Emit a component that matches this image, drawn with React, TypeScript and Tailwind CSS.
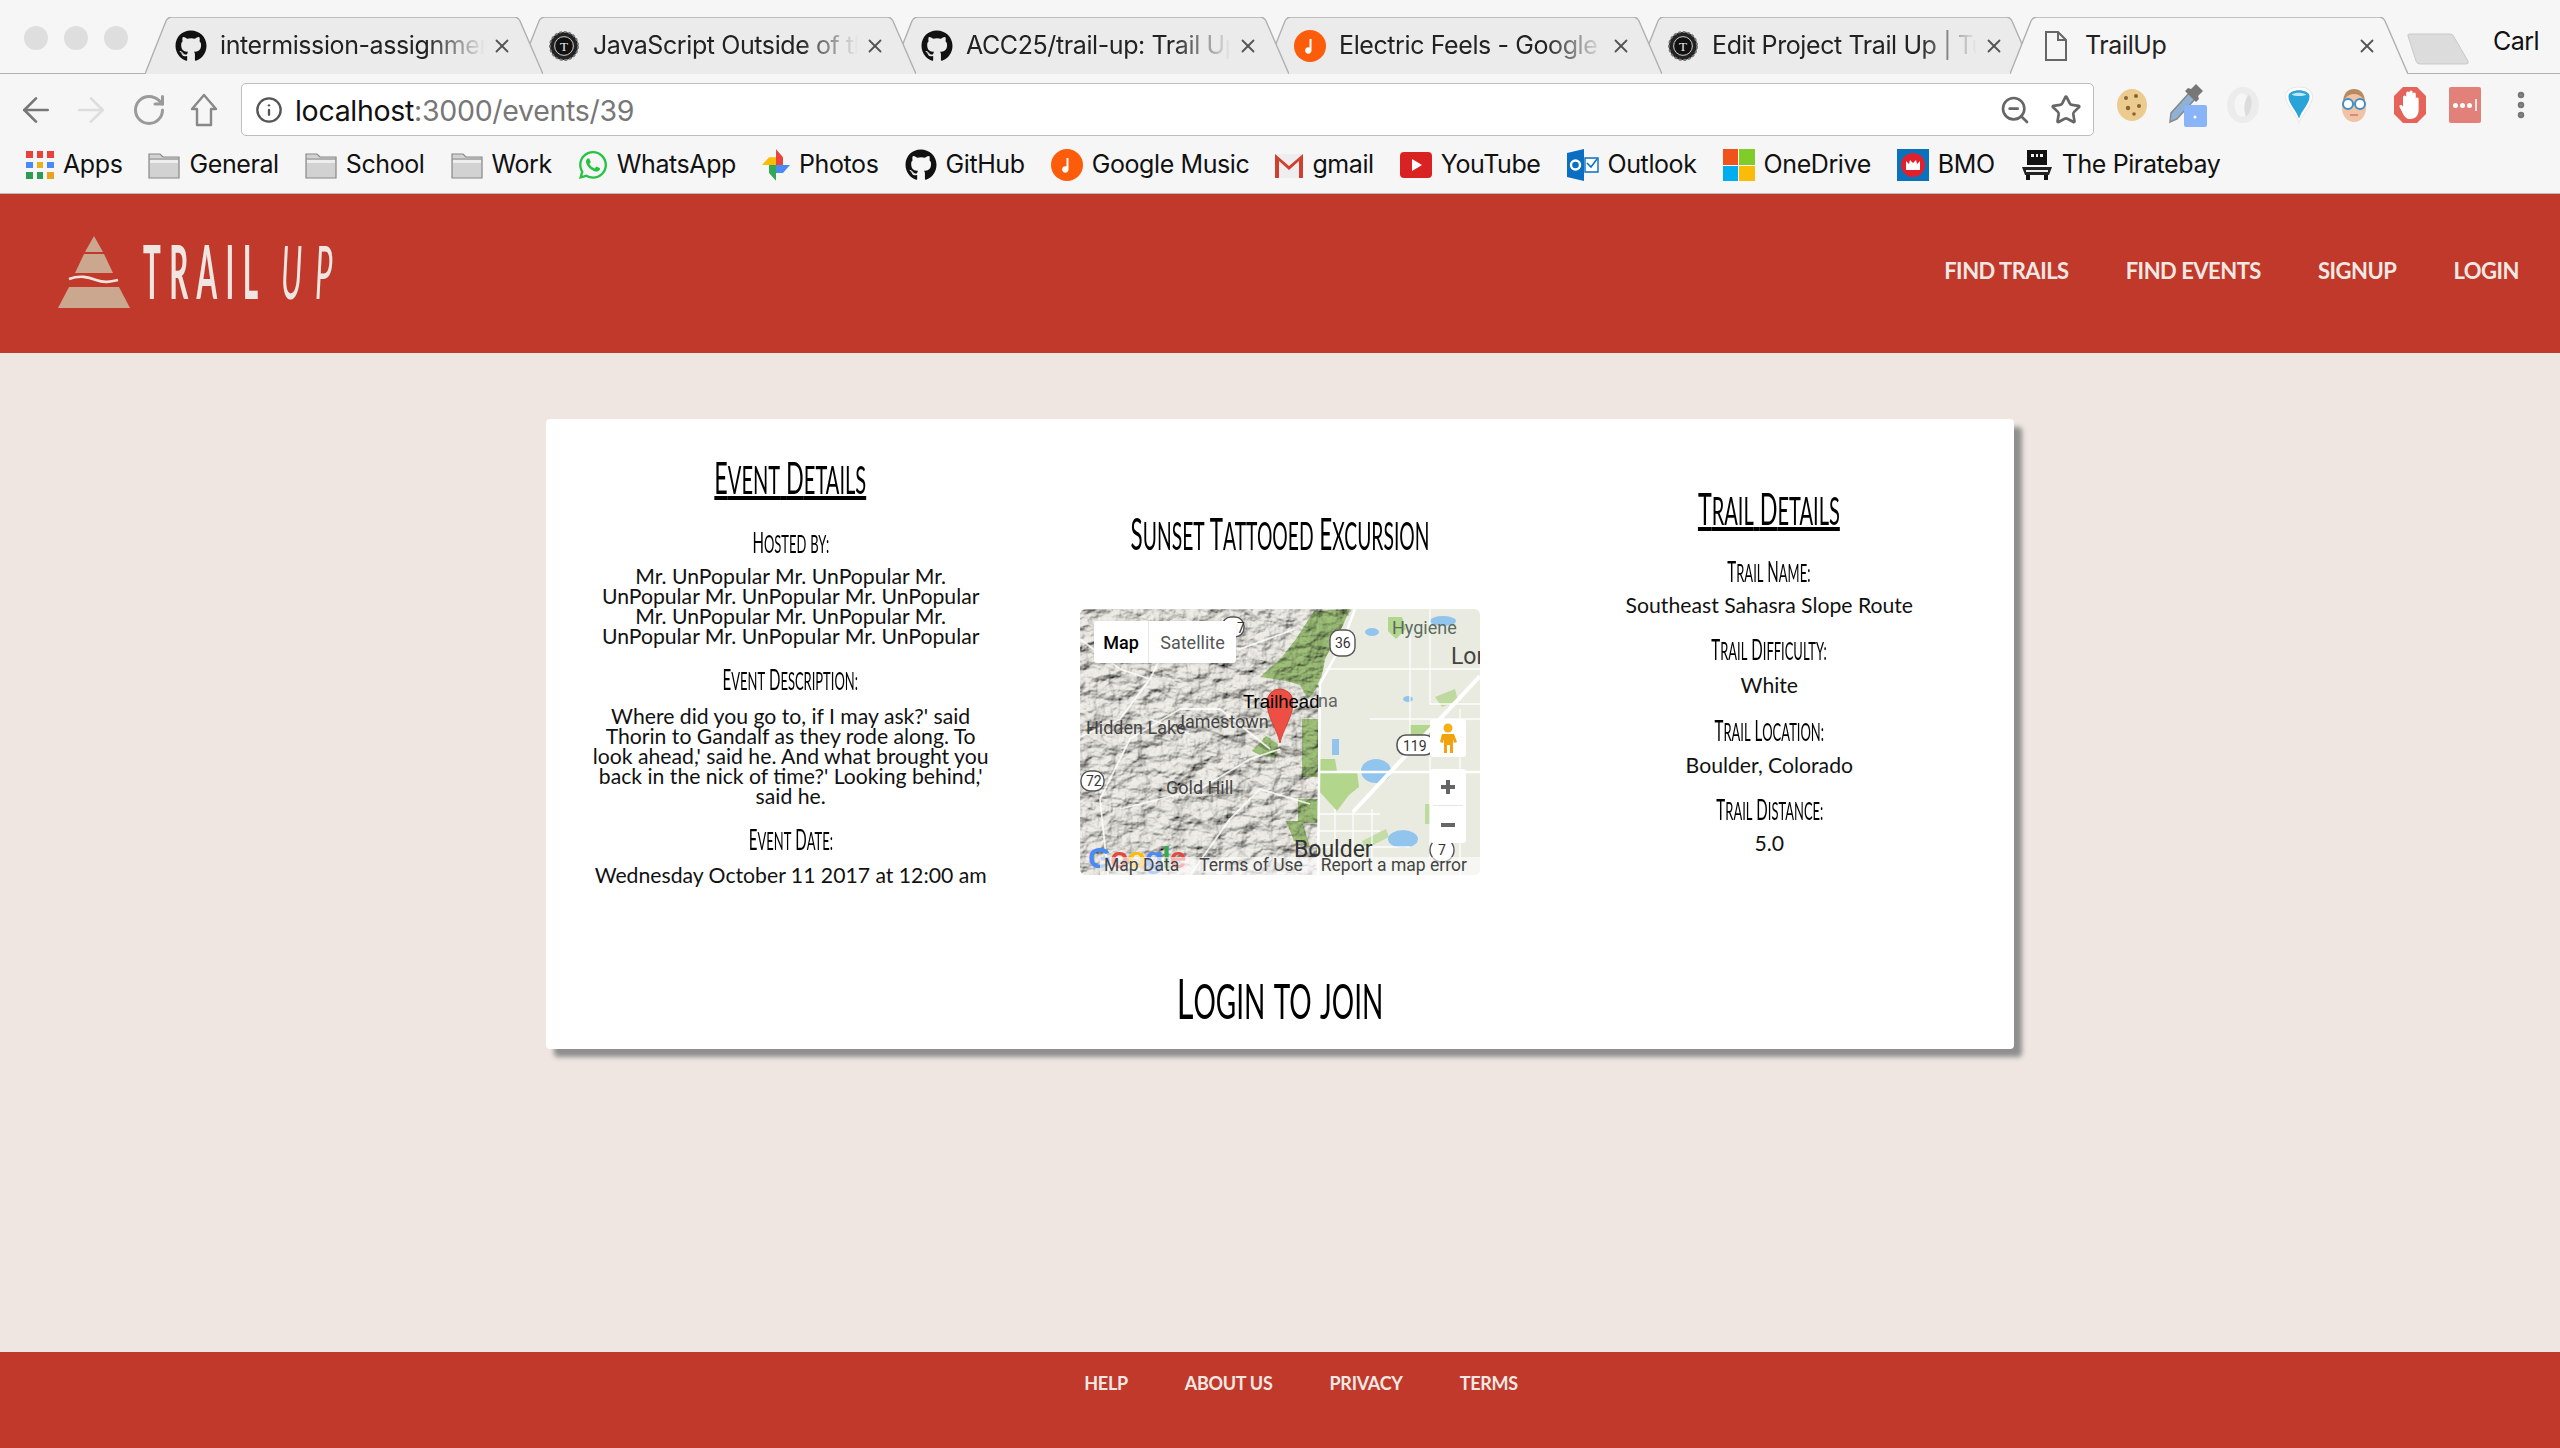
import React from "react";
import { FaGithub, FaWhatsapp } from "react-icons/fa";
import { ArrowLeft, ArrowRight, RotateCw, Info, ZoomOut, Star, X, MoreVertical } from "lucide-react";

function Caps({ text, className }: { text: string; className: string }) {
  return (
    <div className="flex h-full items-center justify-center">
      <span className={"inline-block whitespace-nowrap uppercase [font-family:Lato,sans-serif] " + className}>
        {text.split(" ").map((w, i) => {
          const big = w[0] !== w[0].toLowerCase();
          return (
            <React.Fragment key={i}>
              {i > 0 ? " " : ""}
              {big ? <span>{w[0]}</span> : null}
              <span className="text-[0.86em]">{big ? w.slice(1) : w}</span>
            </React.Fragment>
          );
        })}
      </span>
    </div>
  );
}

const GH = () => <FaGithub className="h-[32px] w-[32px] text-[#111]" />;
const Music = () => (
  <svg viewBox="0 0 32 32" className="h-[32px] w-[32px]">
    <circle cx="16" cy="16" r="16" fill="#fd5c0a" />
    <path d="M17.5 9v11.5a3.2 3.2 0 1 1-2-3V9z" fill="#fff" />
  </svg>
);
const Gear = () => (
  <svg viewBox="0 0 32 32" className="h-[30px] w-[30px]">
    <circle cx="16" cy="16" r="15" fill="#222" stroke="#777" strokeWidth="2" strokeDasharray="3 2" />
    <circle cx="16" cy="16" r="10" fill="#111" stroke="#ddd" strokeWidth="1" />
    <text x="16" y="21" fontSize="14" textAnchor="middle" fill="#eee" fontFamily="Liberation Serif">T</text>
  </svg>
);
const Doc = () => (
  <svg viewBox="0 0 24 32" className="h-[32px] w-[24px]" fill="none" stroke="#666" strokeWidth="2">
    <path d="M2 2h12l8 8v20H2zM14 2v8h8" />
  </svg>
);

const tabs = [
  { z: "z-[6]", icon: <GH />, title: "intermission-assignment" },
  { z: "z-[5]", icon: <Gear />, title: "JavaScript Outside of the Browser" },
  { z: "z-[4]", icon: <GH />, title: "ACC25/trail-up: Trail Up" },
  { z: "z-[3]", icon: <Music />, title: "Electric Feels - Google Music" },
  { z: "z-[2]", icon: <Gear />, title: "Edit Project Trail Up | Tuts" },
];

function TabShape({ active }: { active?: boolean }) {
  return (
    <svg viewBox="0 0 398 57" preserveAspectRatio="none" className="absolute inset-0 h-full w-full">
      <path
        d="M0 57 L21 4 Q23 0 27 0 L369 0 Q373 0 375 4 L398 57"
        fill={active ? "#f6f6f6" : "#ebebeb"}
        stroke="#b0b0b0"
        strokeWidth="1.4"
      />
    </svg>
  );
}

function Tab({ z, icon, title, active }: { z: string; icon: React.ReactNode; title: string; active?: boolean }) {
  return (
    <div className={"relative -mr-[25px] flex h-[57px] w-[398px] shrink-0 items-center pl-[30px] pr-[30px] " + z}>
      <TabShape active={active} />
      <div className="relative flex w-[32px] shrink-0 justify-center">{icon}</div>
      <div
        className={
          "relative ml-[13px] w-[265px] overflow-hidden whitespace-nowrap text-[25px] text-[#222] [font-family:Inter,sans-serif] tracking-[-0.4px] " +
          (active ? "" : "[mask-image:linear-gradient(to_right,black_78%,transparent_100%)]")
        }
      >
        {title}
      </div>
      <X className="relative ml-auto shrink-0 text-[#555]" size={22} strokeWidth={2} />
    </div>
  );
}

function Folder() {
  return (
    <svg viewBox="0 0 32 28" className="h-[28px] w-[32px]">
      <path d="M1 3h11l3 3h16v21H1z" fill="#d2d2d2" stroke="#888" strokeWidth="1.2" />
      <path d="M1 8h30" stroke="#999" strokeWidth="1.2" />
      <path d="M2 9h28v3H2z" fill="#eee" />
    </svg>
  );
}
const AppsIcon = () => (
  <div className="grid h-[28px] w-[28px] grid-cols-3 gap-[4px]">
    {["bg-[#e8423a]", "bg-[#e8423a]", "bg-[#e8423a]", "bg-[#4a8af4]", "bg-[#e9b21f]", "bg-[#4a8af4]", "bg-[#2d9b54]", "bg-[#2d9b54]", "bg-[#e9a41f]"].map((c, i) => (
      <div key={i} className={c} />
    ))}
  </div>
);
const Photos = () => (
  <svg viewBox="0 0 32 36" className="h-[34px] w-[28px]">
    <path d="M16 18V0l8 9v9z" fill="#e8453c" />
    <path d="M16 18h16l-8 9h-8z" fill="#4a8af4" />
    <path d="M16 18v18l-8-9v-9z" fill="#34a853" />
    <path d="M16 18H0l8-9h8z" fill="#fbbc05" />
  </svg>
);
const Gmail = () => (
  <svg viewBox="0 0 28 28" className="h-[28px] w-[28px]">
    <path d="M0 3h28v24H0z" fill="#eee" />
    <path d="M0 3l14 12L28 3v24h-4V10L14 19 4 10v17H0z" fill="#d0402f" />
  </svg>
);
const YT = () => (
  <svg viewBox="0 0 32 26" className="h-[26px] w-[32px]">
    <rect width="32" height="26" rx="4" fill="#d92323" />
    <path d="M12 7l10 6-10 6z" fill="#fff" />
  </svg>
);
const Outlook = () => (
  <svg viewBox="0 0 32 32" className="h-[32px] w-[32px]">
    <path d="M0 4l17-4v32L0 28z" fill="#0a6fc2" />
    <circle cx="8.5" cy="16" r="4.5" fill="none" stroke="#fff" strokeWidth="2.4" />
    <path d="M18 9h13v14H18z" fill="#fff" stroke="#0a6fc2" strokeWidth="1.4" />
    <path d="M20 14l4 4 6-8" fill="none" stroke="#0a6fc2" strokeWidth="1.5" />
  </svg>
);
const MS = () => (
  <div className="grid h-[32px] w-[32px] grid-cols-2 gap-[1px]">
    <div className="bg-[#f1511b]" />
    <div className="bg-[#80cc28]" />
    <div className="bg-[#00adef]" />
    <div className="bg-[#fbbc09]" />
  </div>
);
const BMO = () => (
  <svg viewBox="0 0 32 32" className="h-[32px] w-[32px]">
    <rect width="32" height="32" fill="#0a72bd" />
    <circle cx="16" cy="16" r="12" fill="#e2202c" />
    <path d="M9 21v-9l3 3 1-4 3 3 3-3 1 4 3-3v9z" fill="#fff" />
  </svg>
);
const Pirate = () => (
  <svg viewBox="0 0 32 32" className="h-[32px] w-[32px]">
    <path d="M6 1h20v15H6z" fill="#111" />
    <path d="M10 5h3v3h-3zM15 5h2v3h-2zM19 5h3v3h-3z" fill="#eee" />
    <path d="M1 18h30l-3 8H4z" fill="#222" />
    <path d="M5 21h22v2H5z" fill="#eee" />
    <path d="M5 26h4v5H5zM23 26h4v5h-4z" fill="#111" />
  </svg>
);

const bookmarks: [React.ReactNode, string][] = [
  [<AppsIcon />, "Apps"],
  [<Folder />, "General"],
  [<Folder />, "School"],
  [<Folder />, "Work"],
  [<FaWhatsapp className="h-[32px] w-[30px] text-[#25c243]" />, "WhatsApp"],
  [<Photos />, "Photos"],
  [<GH />, "GitHub"],
  [<Music />, "Google Music"],
  [<Gmail />, "gmail"],
  [<YT />, "YouTube"],
  [<Outlook />, "Outlook"],
  [<MS />, "OneDrive"],
  [<BMO />, "BMO"],
  [<Pirate />, "The Piratebay"],
];

const Ext = ({ children }: { children: React.ReactNode }) => <div className="flex h-[40px] w-[55.6px] items-center justify-center">{children}</div>;

function Extensions() {
  return (
    <div className="ml-[10px] flex items-center pt-[2px]">
      <Ext>
        <svg viewBox="0 0 32 34" className="h-[36px] w-[32px]">
          <ellipse cx="16" cy="17" rx="15" ry="16" fill="#eccb8f" />
          <circle cx="10" cy="10" r="2" fill="#8a6233" />
          <circle cx="20" cy="8" r="2" fill="#8a6233" />
          <circle cx="23" cy="18" r="2" fill="#8a6233" />
          <circle cx="12" cy="20" r="2.2" fill="#8a6233" />
          <circle cx="18" cy="26" r="1.8" fill="#8a6233" />
        </svg>
      </Ext>
      <Ext>
        <svg viewBox="0 0 40 44" className="h-[44px] w-[40px]">
          <path d="M4 30L22 10l6 6L10 36l-7 3z" fill="#8fb1d4" stroke="#888" strokeWidth="1.5" />
          <path d="M24 6l5-5 7 7-5 5 1 3-3 3-11-11 3-3z" fill="#777" />
          <rect x="17" y="22" width="23" height="22" rx="2" fill="#8ab4f8" />
          <circle cx="28" cy="34" r="1.5" fill="#fff" />
        </svg>
      </Ext>
      <Ext>
        <svg viewBox="0 0 32 36" className="h-[40px] w-[34px]">
          <ellipse cx="16" cy="18" rx="15" ry="17" fill="#ececec" />
          <ellipse cx="15" cy="18" rx="7" ry="11" fill="#f6f6f6" />
          <path d="M22 8c-5 4-6 14-3 21 5-5 7-15 3-21z" fill="#dcdcdc" />
        </svg>
      </Ext>
      <Ext>
        <svg viewBox="0 0 28 36" className="h-[38px] w-[30px]">
          <path d="M14 35C11 26 1 18 1 10 1 4 7 1 14 1s13 3 13 9c0 8-10 16-13 25z" fill="#fff" stroke="#e8e8e8" />
          <path d="M14 31C12 24 4 17 4 10c0-4 5-6 10-6s10 2 10 6c0 7-8 14-10 21z" fill="#2aa3d8" />
          <path d="M7 8c3-2 10-2 14 0-3 2-11 2-14 0z" fill="#bfe8f6" />
        </svg>
      </Ext>
      <Ext>
        <svg viewBox="0 0 32 36" className="h-[36px] w-[32px]">
          <path d="M5 16C5 6 10 2 16 2s11 4 11 14v8H5z" fill="#b98a5f" />
          <ellipse cx="16" cy="21" rx="12" ry="14" fill="#f0c3a4" />
          <circle cx="10" cy="17" r="5" fill="#fff" stroke="#3f8fc4" strokeWidth="2" />
          <circle cx="22" cy="17" r="5" fill="#fff" stroke="#3f8fc4" strokeWidth="2" />
          <path d="M12 28h8" stroke="#c77" strokeWidth="1.5" />
        </svg>
      </Ext>
      <Ext>
        <svg viewBox="0 0 32 36" className="h-[36px] w-[32px]">
          <path d="M9 0h14l9 9v18l-9 9H9l-9-9V9z" fill="#e6635a" />
          <path d="M9 20V10a1.6 1.6 0 0 1 3.2 0V6a1.6 1.6 0 0 1 3.2 0v-1a1.6 1.6 0 0 1 3.2 0v2a1.6 1.6 0 0 1 3.2 0v5a1.4 1.4 0 0 1 2.8 0v11c0 5-3 9-8 9-4 0-6-2-8-6l-3-6c-1-2 2-3 3-1z" fill="#fff" />
        </svg>
      </Ext>
      <Ext>
        <div className="flex h-[36px] w-[32px] items-center justify-center gap-[2px] rounded-[2px] bg-[#e2807a]">
          <div className="h-[5px] w-[5px] rounded-full bg-white" />
          <div className="h-[5px] w-[5px] rounded-full bg-white" />
          <div className="h-[5px] w-[5px] rounded-full bg-white" />
          <div className="ml-[1px] h-[12px] w-[2px] bg-white/80" />
        </div>
      </Ext>
      <Ext>
        <MoreVertical className="text-[#777]" size={34} strokeWidth={2.6} />
      </Ext>
    </div>
  );
}

function MapPic() {
  return (
    <svg viewBox="0 0 400 266" className="absolute inset-0 h-full w-full">
      <defs>
        <filter id="terrain" x="0" y="0" width="100%" height="100%">
          <feTurbulence type="fractalNoise" baseFrequency="0.05 0.07" numOctaves="6" seed="23" result="n" />
          <feDiffuseLighting in="n" surfaceScale="7" diffuseConstant="1.1" lightingColor="#e6e4de">
            <feDistantLight azimuth="235" elevation="55" />
          </feDiffuseLighting>
        </filter>
        <clipPath id="mtn">
          <path d="M0 0H272L245 50 238 90V266H0z" />
        </clipPath>
      </defs>
      <rect width="400" height="266" fill="#e9ebe1" />
      <g clipPath="url(#mtn)">
        <rect width="400" height="266" filter="url(#terrain)" />
        <g fill="#a9cf86" className="mix-blend-multiply">
          <path d="M180 68l22-20 14-18 18-28 36-2-22 50-12 30-8 10-8-14-14-4z" />
          <path d="M172 142l14-15 12 8-2 14-14-2z" />
          <path d="M222 110h16v58h-16z" />
          <path d="M218 190h20v24h-20z" />
          <path d="M206 212l16 0 8 26-16-6z" />
        </g>
      </g>
      <g fill="#b3d68d">
        <path d="M239 150h16l2 12 20 0 2 16-10 8-12 16-18-20z" />
        <path d="M308 8h14l4 12-10 10-8-8z" />
        <path d="M330 116h24l-4 12-20 4z" />
        <path d="M345 195h18v20h-18z" opacity=".8" />
        <path d="M355 88l20-8 3 12-16 6z" opacity=".8" />
        <path d="M282 232l24-12 3 8-24 12z" opacity=".7" />
      </g>
      <g fill="#92c5ee">
        <ellipse cx="292" cy="23" rx="7" ry="4" />
        <ellipse cx="363" cy="12" rx="13" ry="5" />
        <ellipse cx="296" cy="162" rx="15" ry="12" />
        <ellipse cx="323" cy="230" rx="15" ry="9" />
        <ellipse cx="328" cy="90" rx="5" ry="3" />
        <path d="M252 130h7v16h-7z" />
      </g>
      <g fill="none" stroke="#fff">
        <path d="M273 203L400 67" strokeWidth="4" />
        <path d="M275 0L262 35 240 75 238 266" strokeWidth="2.5" />
        <path d="M273 203V266M238 205H300M238 222H300M238 238H330M255 200V266M292 200V250M330 25V140M350 0V95H400M245 60H400M290 110H400M350 148V250M380 100V266" strokeWidth="1.3" opacity=".9" />
        <path d="M0 128L40 110 70 70 80 50 130 35 160 40 215 20M0 30L40 60 70 70M28 266L20 190 50 130 100 100 140 100 190 140M40 200L120 180 170 150 200 140M110 266L150 210 180 180 230 195M70 110L110 125" strokeWidth="1.8" opacity=".8" />
        <path d="M238 163H400" strokeWidth="2.5" />
      </g>
      <g>
        <rect x="250" y="21" width="25" height="26" rx="9" fill="#fff" stroke="#555" strokeWidth="1.4" />
        <rect x="317" y="126" width="37" height="20" rx="9" fill="#fff" stroke="#555" strokeWidth="1.6" />
        <rect x="1" y="162" width="23" height="20" rx="9" fill="#fff" stroke="#555" strokeWidth="1.4" />
        <circle cx="362" cy="241" r="12" fill="#fff" stroke="#555" strokeWidth="1.4" />
        <rect x="142" y="8" width="22" height="20" rx="9" fill="#fff" stroke="#555" strokeWidth="1.4" />
      </g>
    </svg>
  );
}

const L = ({ className, children }: { className: string; children: React.ReactNode }) => (
  <span className={"absolute whitespace-nowrap leading-none [font-family:Roboto,sans-serif] " + className}>{children}</span>
);

function MapBox() {
  return (
    <div className="relative mx-auto mt-[53px] h-[266px] w-[400px] overflow-hidden rounded-[6px]">
      <MapPic />
      <L className="left-[312px] top-[10px] text-[18px] text-[#5b6b60]">Hygiene</L>
      <L className="left-[371px] top-[36px] text-[23px] text-[#444]">Lon</L>
      <L className="left-[6px] top-[110px] text-[18px] text-[#444]">Hidden Lake</L>
      <L className="left-[95px] top-[104px] text-[18px] text-[#444]">Jamestown</L>
      <L className="left-[86px] top-[170px] text-[18px] text-[#444]">Gold Hill</L>
      <L className="left-[214px] top-[229px] text-[23px] text-[#333]">Boulder</L>
      <L className="left-[238px] top-[83px] text-[18px] text-[#666]">na</L>
      <L className="left-[255px] top-[27px] text-[14px] text-[#333]">36</L>
      <L className="left-[323px] top-[130px] text-[14px] text-[#333]">119</L>
      <L className="left-[6px] top-[165px] text-[14px] text-[#333]">72</L>
      <L className="left-[358px] top-[234px] text-[14px] text-[#333]">7</L>
      <L className="left-[157px] top-[12px] text-[14px] text-[#333]">7</L>
      <svg viewBox="0 0 26 54" className="absolute left-[187px] top-[80px] h-[54px] w-[26px]">
        <path d="M13 54C10 40 0 28 0 13a13 13 0 0 1 26 0c0 15-10 27-13 41z" fill="#ee4f45" stroke="#c5382f" strokeWidth=".8" />
      </svg>
      <span className="absolute left-[163px] top-[83px] whitespace-nowrap text-[18.5px] leading-[20px] text-black [font-family:'Liberation_Sans',sans-serif]">Trailhead</span>
      <div className="absolute left-[14px] top-[12px] flex h-[42px] w-[142px] items-center rounded-[3px] bg-white text-[18px] [font-family:Roboto,sans-serif] shadow-sm">
        <div className="flex h-full w-[55px] items-center justify-center border-r border-[#e6e6e6] font-medium text-black">Map</div>
        <div className="flex-1 text-center text-[#565656]">Satellite</div>
      </div>
      <div className="absolute left-[350px] top-[110px] flex h-[38px] w-[36px] items-center justify-center rounded-[3px] bg-white">
        <svg viewBox="0 0 18 30" className="h-[30px] w-[18px]">
          <circle cx="9" cy="5" r="4.5" fill="#f5b016" />
          <path d="M3 11h12l3 8-3 1-1-4v14h-3v-8H8v8H5V16l-1 4-3-1z" fill="#f0a30f" />
        </svg>
      </div>
      <div className="absolute left-[350px] top-[160px] flex h-[74px] w-[36px] flex-col items-center rounded-[3px] bg-white">
        <div className="flex h-[36px] w-full items-center justify-center border-b border-transparent">
          <div className="relative h-[14px] w-[14px]">
            <div className="absolute left-0 top-[5px] h-[4px] w-[14px] bg-[#666]" />
            <div className="absolute left-[5px] top-0 h-[14px] w-[4px] bg-[#666]" />
          </div>
        </div>
        <div className="h-px w-[30px] bg-[#e6e6e6]" />
        <div className="flex h-[37px] w-full items-center justify-center">
          <div className="h-[4px] w-[14px] bg-[#666]" />
        </div>
      </div>
      <span className="absolute left-[8px] top-[234px] text-[30px] font-bold leading-none tracking-[-1px] [font-family:'Liberation_Sans',sans-serif]">
        <span className="text-[#4a8af4]">G</span>
        <span className="text-[#e8453c]">o</span>
        <span className="text-[#fbbc05]">o</span>
        <span className="text-[#4a8af4]">g</span>
        <span className="text-[#34a853]">l</span>
        <span className="text-[#e8453c]">e</span>
      </span>
      <div className="absolute bottom-0 left-[20px] right-0 flex h-[18px] items-center bg-white/60 text-[17.5px] leading-none text-[#444] [font-family:Roboto,sans-serif]">
        <span className="ml-[4px]">Map Data</span>
        <span className="ml-[20px]">Terms of Use</span>
        <span className="ml-[18px]">Report a map error</span>
      </div>
    </div>
  );
}

const Head = ({ text }: { text: string }) => (
  <div className="h-[44px]">
    <Caps text={text} className="text-[44px] leading-[44px] scale-x-[0.53] underline decoration-[4px] underline-offset-[2px]" />
  </div>
);
const Label = ({ text, className }: { text: string; className: string }) => (
  <div className={"h-[30px] " + className}>
    <Caps text={text} className="text-[29px] leading-[30px] font-normal scale-x-[0.52]" />
  </div>
);
const Body = ({ className, children }: { className: string; children: React.ReactNode }) => (
  <p className={"text-center text-[21.2px] leading-[20px] text-[#111] [font-family:Lato,sans-serif] " + className}>{children}</p>
);

export default function App() {
  return (
    <div className="flex h-[1448px] flex-col overflow-hidden bg-[#efe6e1] [font-family:Lato,sans-serif]">
      {/* Browser chrome */}
      <div className="bg-[#f6f6f6]">
        <div className="relative flex h-[74px] items-end border-b border-[#b0b0b0] pl-[145px]">
          <div className="absolute left-[24px] top-[26px] flex gap-[16px]">
            <div className="h-[24px] w-[24px] rounded-full bg-[#dedede]" />
            <div className="h-[24px] w-[24px] rounded-full bg-[#dedede]" />
            <div className="h-[24px] w-[24px] rounded-full bg-[#dedede]" />
          </div>
          <div className="flex translate-y-px">
            {tabs.map((t) => (
              <Tab key={t.title} {...t} />
            ))}
            <Tab z="z-10" active icon={<Doc />} title="TrailUp" />
          </div>
          <svg viewBox="0 0 64 32" className="absolute left-[2406px] top-[33px] h-[32px] w-[64px]">
            <path d="M2 3Q1 1 4 1H44Q47 1 48 4L62 28Q63 31 60 31H14Q11 31 10 28z" fill="#dcdcdc" stroke="#c9c9c9" />
          </svg>
          <span className="absolute left-[2493px] top-[27px] text-[25px] leading-[28px] text-[#111] [font-family:Inter,sans-serif] tracking-[-0.5px]">Carl</span>
        </div>
        <div className="flex h-[62px] items-start pt-[9px]">
          <div className="flex w-[241px] items-center pt-[7px]">
            <ArrowLeft className="ml-[16px] text-[#777]" size={40} strokeWidth={1.6} />
            <ArrowRight className="ml-[15px] text-[#ddd]" size={40} strokeWidth={1.6} />
            <RotateCw className="ml-[20px] text-[#9a9a9a]" size={36} strokeWidth={2} />
            <svg viewBox="0 0 28 34" className="ml-[23px] h-[36px] w-[28px]" fill="none" stroke="#888" strokeWidth="2.4">
              <path d="M14 2L2 16h5v16h14V16h5z" strokeLinejoin="round" />
            </svg>
          </div>
          <div className="flex h-[53px] w-[1853px] items-center rounded-[5px] border border-[#bdbdbd] bg-white">
            <Info className="ml-[13px] text-[#555]" size={28} strokeWidth={2} />
            <div className="ml-[12px] pt-[4px] text-[28.5px] tracking-[-0.3px] text-[#111] [font-family:Inter,sans-serif]">
              localhost<span className="text-[#777]">:3000/events/39</span>
            </div>
            <ZoomOut className="ml-auto text-[#666]" size={32} strokeWidth={2} />
            <Star className="ml-[19px] mr-[11px] text-[#666]" size={32} strokeWidth={2} />
          </div>
          <Extensions />
        </div>
        <div className="flex h-[58px] items-center gap-[26px] border-b border-[#bdb8b6] pl-[26px] pt-[1px] text-[25px] text-[#111] [font-family:Inter,sans-serif] tracking-[-0.4px]">
          {bookmarks.map(([ic, t]) => (
            <div key={t} className="flex items-center gap-[9px] whitespace-nowrap">
              {ic}
              <span>{t}</span>
            </div>
          ))}
        </div>
      </div>

      {/* Site header */}
      <header className="flex h-[159px] shrink-0 items-center justify-between bg-[#c0392b] pl-[58px] pr-[41px] pb-[6px]">
        <div className="flex items-center">
          <svg viewBox="0 0 72 72" className="mt-[2px] h-[72px] w-[72px]">
            <path d="M36 0L45 16H27z" fill="#cba78f" />
            <path d="M26 18H46L55 37H17z" fill="#cba78f" />
            <path d="M11 51H61L72 72H0z" fill="#cba78f" />
            <path d="M11 43C22 39 30 41 38 44S52 46 60 44" fill="none" stroke="#f1e4dd" strokeWidth="2.6" />
          </svg>
          <div className="relative ml-[13px] h-[60px] w-[192px] overflow-visible">
            <span className="absolute left-0 top-[-7px] origin-left whitespace-nowrap text-[74px] font-bold leading-[74px] tracking-[21px] text-[#efe6e1] scale-x-[0.4]">
              TRAIL
            </span>
            <span className="absolute left-[138px] top-[-7px] origin-left whitespace-nowrap text-[74px] font-normal italic leading-[74px] tracking-[30px] text-[#efe6e1] scale-x-[0.42]">
              UP
            </span>
          </div>
        </div>
        <nav className="flex gap-[57px] text-[22px] font-bold tracking-[-0.5px] text-[#f1e8e3]">
          <span>FIND TRAILS</span>
          <span>FIND EVENTS</span>
          <span>SIGNUP</span>
          <span>LOGIN</span>
        </nav>
      </header>

      {/* Main */}
      <main className="flex-1 pt-[66px]">
        <div className="mx-auto h-[630px] w-[1468px] rounded-[4px] bg-white shadow-[8px_8px_5px_#8f8f8f]">
          <div className="grid h-[550px] grid-cols-3">
            <div className="pt-[37px]">
              <Head text="Event Details" />
              <Label text="Hosted by:" className="mt-[27px]" />
              <Body className="mx-auto mt-[9px] w-[400px]">
                Mr. UnPopular Mr. UnPopular Mr. UnPopular Mr. UnPopular Mr. UnPopular Mr. UnPopular Mr. UnPopular Mr. UnPopular Mr. UnPopular Mr. UnPopular
              </Body>
              <Label text="Event Description:" className="mt-[18px]" />
              <Body className="mx-auto mt-[12px] w-[400px]">
                Where did you go to, if I may ask?' said Thorin to Gandalf as they rode along. To look ahead,' said he. And what brought you back in the nick of time?' Looking behind,' said he.
              </Body>
              <Label text="Event Date:" className="mt-[18px]" />
              <Body className="mt-[11px]">Wednesday October 11 2017 at 12:00 am</Body>
            </div>
            <div className="pt-[93px]">
              <div className="h-[44px]">
                <Caps text="Sunset Tattooed Excursion" className="text-[44px] leading-[44px] scale-x-[0.51]" />
              </div>
              <MapBox />
            </div>
            <div className="pt-[68px]">
              <Head text="Trail Details" />
              <Label text="Trail Name:" className="mt-[25px]" />
              <Body className="mt-[9px]">Southeast Sahasra Slope Route</Body>
              <Label text="Trail Difficulty:" className="mt-[19px]" />
              <Body className="mt-[11px]">White</Body>
              <Label text="Trail Location:" className="mt-[20px]" />
              <Body className="mt-[10px]">Boulder, Colorado</Body>
              <Label text="Trail Distance:" className="mt-[19px]" />
              <Body className="mt-[9px]">5.0</Body>
            </div>
          </div>
          <div className="h-[60px]">
            <Caps text="Login to join" className="text-[56px] leading-[60px] scale-x-[0.58]" />
          </div>
        </div>
      </main>

      {/* Footer */}
      <footer className="flex h-[96px] shrink-0 justify-center gap-[57px] bg-[#c0392b] pl-[42px] pt-[19px] text-[18px] font-bold leading-[24px] tracking-[-0.3px] text-[#f1e8e3]">
        <span>HELP</span>
        <span>ABOUT US</span>
        <span>PRIVACY</span>
        <span>TERMS</span>
      </footer>
    </div>
  );
}
